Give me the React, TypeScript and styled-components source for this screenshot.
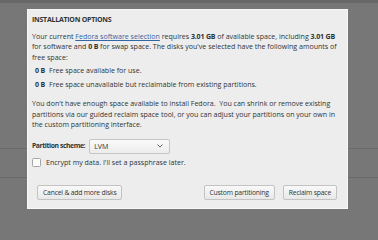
import React from "react";
import styled, { createGlobalStyle } from "styled-components";

const Global = createGlobalStyle`
  html, body { margin: 0; padding: 0; }
  body { background: #777777; font-family: "Open Sans", "DejaVu Sans", sans-serif; }
`;

const Screen = styled.div`
  position: relative;
  width: 378px;
  height: 240px;
  overflow: hidden;
  background: #777777;
  display: flex;
  flex-direction: column;
`;

const TopBand = styled.div`
  height: 3px;
  background: #686868;
  flex: none;
`;

const Spacer = styled.div<{ h: number }>`
  height: ${(p) => p.h}px;
  flex: none;
`;

const BgRow = styled.div<{ h: number }>`
  height: ${(p) => p.h}px;
  border-bottom: 1px solid #6a6a6a;
  flex: none;
`;

const Dialog = styled.div`
  position: absolute;
  left: 27px;
  top: 9px;
  width: 321px;
  height: 200px;
  box-sizing: border-box;
  background: #ededed;
  border: 1px solid #f7f7f7;
  padding: 5px 2px 0 4px;
  color: #2e3436;
  font-size: 7.05px;
  line-height: 10.6px;
  display: flex;
  flex-direction: column;
`;

const Title = styled.div`
  font-weight: 700;
  font-size: 7px;
  letter-spacing: -0.25px;
  margin-bottom: 5px;
`;

const Para = styled.div`
  margin: 0;
`;

const Link = styled.span`
  color: #3465a4;
  text-decoration: underline;
`;

const B = styled.b`
  font-weight: 700;
  letter-spacing: -0.2px;
`;

const List = styled.div`
  display: flex;
  flex-direction: column;
  gap: 3.5px;
  margin: 3px 0 8px 3px;
`;

const ListItem = styled.div`
  display: flex;
  gap: 4px;
`;

const Row = styled.div`
  display: flex;
  align-items: center;
  gap: 4px;
  margin-top: 9px;
`;

const Label = styled.span`
  font-weight: 700;
  font-size: 6.8px;
  letter-spacing: -0.4px;
`;

const Select = styled.div`
  width: 81px;
  height: 15px;
  box-sizing: border-box;
  border: 1px solid #c6c6c6;
  border-radius: 2px;
  background: linear-gradient(#fafafa, #ececec);
  display: flex;
  align-items: center;
  justify-content: space-between;
  padding: 0 6px 0 4px;
`;

const Check = styled.div`
  width: 7px;
  height: 7px;
  border: 1px solid #a5a5a5;
  border-radius: 1.5px;
  background: #fbfbfb;
  flex: none;
`;

const CheckRow = styled.div`
  display: flex;
  align-items: center;
  gap: 5px;
  margin-top: 3px;
`;

const Buttons = styled.div`
  display: flex;
  align-items: center;
  margin-top: 18px;
  padding-left: 5px;
  padding-right: 8px;
  gap: 8px;
`;

const Button = styled.div`
  height: 15px;
  box-sizing: border-box;
  border: 1px solid #c3c3c3;
  border-radius: 2px;
  background: linear-gradient(#f9f9f9, #e8e8e8);
  display: flex;
  align-items: center;
  justify-content: center;
  padding: 0 5px;
  font-size: 6.8px;
  letter-spacing: -0.2px;
`;

const Grow = styled.div`
  flex: 1;
`;

export default function App() {
  return (
    <>
      <Global />
      <Screen>
        <TopBand />
        <Spacer h={118} />
        <BgRow h={27} />
        <BgRow h={28} />
        <Dialog>
          <Title>INSTALLATION OPTIONS</Title>
          <Para>
            Your current <Link>Fedora software selection</Link> requires <B>3.01 GB</B> of available space, including <B>3.01 GB</B> for software and <B>0 B</B> for swap space. The disks you've selected have the following amounts of free space:
          </Para>
          <List>
            <ListItem>
              <B>0 B</B>
              <span>Free space available for use.</span>
            </ListItem>
            <ListItem>
              <B>0 B</B>
              <span>Free space unavailable but reclaimable from existing partitions.</span>
            </ListItem>
          </List>
          <Para>
            You don't have enough space available to install Fedora.&nbsp; You can shrink or remove existing partitions via our guided reclaim space tool, or you can adjust your partitions on your own in the custom partitioning interface.
          </Para>
          <Row>
            <Label>Partition scheme:</Label>
            <Select>
              <span>LVM</span>
              <svg width="6" height="4" viewBox="0 0 6 4">
                <path d="M0.5 0.5 L3 3 L5.5 0.5" fill="none" stroke="#555" strokeWidth="0.9" />
              </svg>
            </Select>
          </Row>
          <CheckRow>
            <Check />
            <span>Encrypt my data. I'll set a passphrase later.</span>
          </CheckRow>
          <Buttons>
            <Button>Cancel &amp; add more disks</Button>
            <Grow />
            <Button>Custom partitioning</Button>
            <Button>Reclaim space</Button>
          </Buttons>
        </Dialog>
      </Screen>
    </>
  );
}
